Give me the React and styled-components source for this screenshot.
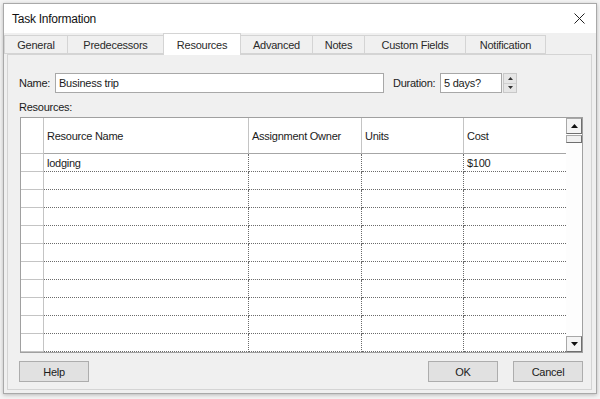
import React from "react";
import styled, { createGlobalStyle } from "styled-components";

const Global = createGlobalStyle`
  html, body { margin: 0; padding: 0; }
  body {
    background: #f4f4f4;
    font-family: "Liberation Sans", Arial, sans-serif;
    font-size: 11px;
    letter-spacing: -0.25px;
    color: #1b1b1b;
    width: 600px;
    height: 399px;
    overflow: hidden;
  }
  * { box-sizing: border-box; }
`;

const Window = styled.div`
  margin: 3px 0 0 3px;
  width: 594px;
  height: 391px;
  border: 1px solid #a9a9a9;
  background: #f0f0f0;
  box-shadow: 0 1px 4px rgba(0, 0, 0, 0.25);
  display: flex;
  flex-direction: column;
`;

const TitleBar = styled.div`
  height: 29px;
  background: #ffffff;
  display: flex;
  align-items: center;
  justify-content: space-between;
  padding: 0 11px 0 8px;
  font-size: 12px;
  color: #111;
`;

const CloseIcon = styled.svg`
  width: 11px;
  height: 11px;
`;

const Body = styled.div`
  flex: 1;
  display: flex;
  flex-direction: column;
  padding: 0 4px 3px 0;
`;

const TabStrip = styled.div`
  display: flex;
  align-items: flex-end;
  height: 21px;
  position: relative;
  z-index: 1;
`;

const Tab = styled.div`
  width: ${(p) => p.w}px;
  height: ${(p) => (p.active ? 22 : 19)}px;
  margin-bottom: ${(p) => (p.active ? -1 : 0)}px;
  margin-left: ${(p) => (p.first ? 0 : -1)}px;
  display: flex;
  align-items: center;
  justify-content: center;
  background: ${(p) => (p.active ? "#ffffff" : "#f0f0f0")};
  border: 1px solid #d4d4d4;
  border-bottom: ${(p) => (p.active ? "none" : "1px solid #d4d4d4")};
  color: #2a2a2a;
  padding-top: ${(p) => (p.active ? 0 : 1)}px;
`;

const Panel = styled.div`
  flex: 1;
  border: 1px solid #d4d4d4;
  margin-left: 3px;
  background: #f0f0f0;
  display: flex;
  flex-direction: column;
  padding: 18px 8px 0 11px;
`;

const FieldRow = styled.div`
  display: flex;
  align-items: center;
  height: 20px;
`;

const Label = styled.span`
  width: ${(p) => p.w}px;
  margin-left: ${(p) => p.lead || 0}px;
  flex: none;
`;

const TextBox = styled.div`
  width: ${(p) => p.w}px;
  height: 20px;
  background: #fff;
  border: 1px solid #a8a8a8;
  display: flex;
  align-items: center;
  padding-left: 3px;
`;

const Spinner = styled.div`
  width: 14px;
  height: 20px;
  margin-left: 1px;
  background: #e6e6e6;
  border: 1px solid #c8c8c8;
  display: flex;
  flex-direction: column;
`;

const SpinHalf = styled.div`
  flex: 1;
  display: flex;
  align-items: center;
  justify-content: center;
  & + & { border-top: 1px solid #d0d0d0; }
`;

const ResLabel = styled.div`
  margin-top: 7px;
  height: 14px;
  line-height: 14px;
`;

const GridWrap = styled.div`
  margin-top: 3px;
  margin-left: 1px;
  width: 563px;
  height: 236px;
  border: 1px solid #a0a0a0;
  background: #fff;
  display: flex;
  overflow: hidden;
`;

const Grid = styled.div`
  display: grid;
  grid-template-columns: 23px 205px 113px 102px 102px;
  grid-template-rows: 36px repeat(11, 18px);
  width: 545px;
  flex: none;
`;

const HeadCell = styled.div`
  border-right: ${(p) => (p.last ? "none" : "1px solid #c4c4c4")};
  border-bottom: 1px solid #a6a6a6;
  display: flex;
  align-items: center;
  padding-left: 3px;
  color: #1b1b1b;
`;

const RowHead = styled.div`
  border-right: 1px solid #c4c4c4;
  border-bottom: 1px solid #c4c4c4;
`;

const Cell = styled.div`
  border-right: ${(p) => (p.last ? "none" : "1px dotted #6a6a6a")};
  border-bottom: 1px dotted #6a6a6a;
  display: flex;
  align-items: center;
  padding-left: 3px;
  white-space: nowrap;
  color: #1b1b1b;
`;

const ScrollBar = styled.div`
  width: 16px;
  display: flex;
  flex-direction: column;
  background: #fdfdfd;
`;

const ScrollBtn = styled.div`
  height: 16px;
  background: #f4f4f4;
  border: 1px solid #a8a8a8;
  border-right-color: #6f6f6f;
  border-bottom-color: #6f6f6f;
  display: flex;
  align-items: center;
  justify-content: center;
`;

const Thumb = styled.div`
  height: 8px;
  margin-top: 1px;
  background: #f0f0f0;
  border: 1px solid #a8a8a8;
  border-right-color: #6f6f6f;
  border-bottom-color: #6f6f6f;
`;

const Track = styled.div`
  flex: 1;
`;

const ButtonRow = styled.div`
  display: flex;
  align-items: center;
  margin-top: 8px;
`;

const Button = styled.div`
  width: 70px;
  height: 21px;
  background: #e1e1e1;
  border: 1px solid #adadad;
  display: flex;
  align-items: center;
  justify-content: center;
  margin-left: ${(p) => p.ml || 0}px;
  color: #1b1b1b;
`;

const tabs = [
  { t: "General", w: 64 },
  { t: "Predecessors", w: 97 },
  { t: "Resources", w: 78, active: true },
  { t: "Advanced", w: 73 },
  { t: "Notes", w: 53 },
  { t: "Custom Fields", w: 102 },
  { t: "Notification", w: 81 },
];

const cols = ["Resource Name", "Assignment Owner", "Units", "Cost"];
const rows = [["lodging", "", "", "$100"]];
while (rows.length < 11) rows.push(["", "", "", ""]);

const Tri = ({ up }) => (
  <svg width="7" height="4" viewBox="0 0 7 4">
    <path d={up ? "M0 4 L3.5 0 L7 4 Z" : "M0 0 L3.5 4 L7 0 Z"} fill="#111" />
  </svg>
);

const SmallTri = ({ up }) => (
  <svg width="5" height="3" viewBox="0 0 5 3">
    <path d={up ? "M0 3 L2.5 0 L5 3 Z" : "M0 0 L2.5 3 L5 0 Z"} fill="#333" />
  </svg>
);

export default function App() {
  return (
    <>
      <Global />
      <Window>
        <TitleBar>
          <span>Task Information</span>
          <CloseIcon viewBox="0 0 11 11">
            <path d="M0.5 0.5 L10.5 10.5 M10.5 0.5 L0.5 10.5" stroke="#222" strokeWidth="1" />
          </CloseIcon>
        </TitleBar>
        <Body>
          <TabStrip>
            {tabs.map((tb, i) => (
              <Tab key={tb.t} w={tb.w} active={tb.active} first={i === 0}>
                {tb.t}
              </Tab>
            ))}
          </TabStrip>
          <Panel>
            <FieldRow>
              <Label w={36}>Name:</Label>
              <TextBox w={329}>Business trip</TextBox>
              <Label lead={9} w={47}>Duration:</Label>
              <TextBox w={62}>5 days?</TextBox>
              <Spinner>
                <SpinHalf><SmallTri up /></SpinHalf>
                <SpinHalf><SmallTri /></SpinHalf>
              </Spinner>
            </FieldRow>
            <ResLabel>Resources:</ResLabel>
            <GridWrap>
              <Grid>
                <RowHead />
                {cols.map((c, i) => (
                  <HeadCell key={c} last={i === cols.length - 1}>{c}</HeadCell>
                ))}
                {rows.map((r, ri) => (
                  <React.Fragment key={ri}>
                    <RowHead />
                    {r.map((v, ci) => (
                      <Cell key={ci} last={ci === r.length - 1}>{v}</Cell>
                    ))}
                  </React.Fragment>
                ))}
              </Grid>
              <ScrollBar>
                <ScrollBtn><Tri up /></ScrollBtn>
                <Thumb />
                <Track />
                <ScrollBtn><Tri /></ScrollBtn>
              </ScrollBar>
            </GridWrap>
            <ButtonRow>
              <Button>Help</Button>
              <Button ml={339}>OK</Button>
              <Button ml={15}>Cancel</Button>
            </ButtonRow>
          </Panel>
        </Body>
      </Window>
    </>
  );
}
